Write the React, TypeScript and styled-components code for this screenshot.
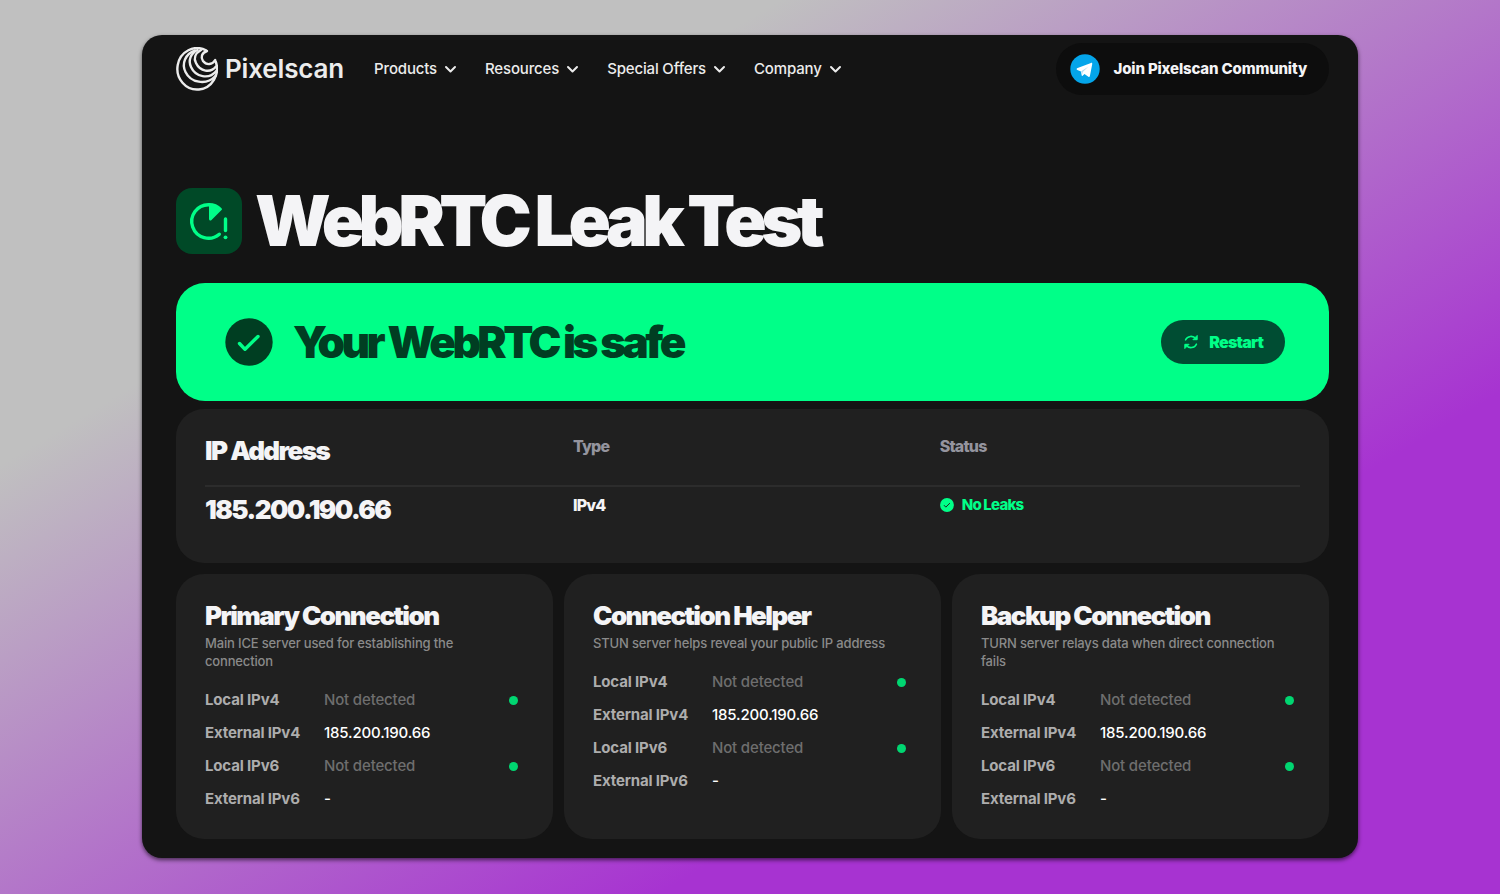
import React from "react";
import styled, { createGlobalStyle } from "styled-components";

const GlobalStyle = createGlobalStyle`
  *, *::before, *::after { box-sizing: border-box; }
  body {
    margin: 0;
    font-family: Inter, "Liberation Sans", sans-serif;
    letter-spacing: -0.01em;
    color: #f4f4f6;
    -webkit-font-smoothing: antialiased;
  }
  h1, h2, h3, p, dl, dd, dt, ul { margin: 0; padding: 0; }
  button { font-family: inherit; letter-spacing: inherit; border: 0; cursor: pointer; }
`;

const tracking = {
  display: "-0.08em",
  heading: "-0.06em",
  label: "-0.05em",
};

const Page = styled.div`
  min-height: 100vh;
  padding: 35px 142px 36px;
  background: linear-gradient(to bottom right, #c0c0c0 26%, #a733d1 72%);
`;

const Window = styled.div`
  padding: 8px 29px 19px 34px;
  border-radius: 20px;
  background: #141414;
  box-shadow: 0 2px 4px rgba(0, 0, 0, 0.6);
`;

const Header = styled.header`
  display: flex;
  align-items: center;
  height: 52px;
`;

const Brand = styled.a`
  display: flex;
  align-items: center;
  gap: 7px;
  color: #ececec;
  font-size: 26px;
  font-weight: 600;
  line-height: 44px;
  text-decoration: none;
`;

const Nav = styled.nav`
  display: flex;
  gap: 28px;
  margin-left: 30px;
`;

const NavButton = styled.button`
  display: flex;
  align-items: center;
  gap: 7px;
  padding: 0;
  background: none;
  color: #ececec;
  font-size: 15px;
  font-weight: 500;
  line-height: 20px;
`;

const Community = styled.a`
  display: flex;
  align-items: center;
  gap: 14px;
  height: 52px;
  margin-left: auto;
  padding: 0 22px 0 14px;
  border-radius: 26px;
  background: #0d0d0d;
  color: #f4f4f6;
  font-size: 15px;
  font-weight: 800;
  line-height: 20px;
  text-decoration: none;
`;

const TitleRow = styled.div`
  display: flex;
  align-items: center;
  gap: 13px;
  margin-top: 93px;
`;

const TitleIcon = styled.span`
  display: flex;
  width: 66px;
  height: 66px;
  border-radius: 16px;
  background: #004927;
`;

const Title = styled.h1`
  font-size: 70px;
  font-weight: 900;
  line-height: 66px;
  letter-spacing: ${tracking.display};
`;

const Banner = styled.section`
  display: flex;
  align-items: center;
  gap: 20px;
  height: 118px;
  margin-top: 29px;
  padding: 0 44px 0 49px;
  border-radius: 29px;
  background: #00ff88;
  color: #003e22;
`;

const BannerText = styled.h2`
  font-size: 44px;
  font-weight: 900;
  line-height: 48px;
  letter-spacing: ${tracking.display};
`;

const Restart = styled.button`
  display: flex;
  align-items: center;
  gap: 10px;
  height: 44px;
  margin-left: auto;
  padding: 0 22px;
  border-radius: 22px;
  background: #004d33;
  color: #00ff88;
  font-size: 16px;
  font-weight: 900;
  letter-spacing: ${tracking.label};
`;

const Panel = styled.section`
  padding: 28px 29px 30px;
  border-radius: 28px;
  background: #202020;
`;

const AddressPanel = styled(Panel)`
  min-height: 154px;
  margin-top: 8px;
`;

const AddressTable = styled.table`
  width: 100%;
  table-layout: fixed;
  border-collapse: collapse;
  text-align: left;

  th, td {
    padding: 0;
    vertical-align: top;
    font-weight: 800;
    letter-spacing: ${tracking.label};
  }
  thead tr { border-bottom: 2px solid #2c2c2c; }
`;

const HeadCell = styled.th`
  height: 49px;
  color: #94949e;
  font-size: 16px;
  line-height: 18px;
`;

const BigText = styled.div`
  color: #f4f4f6;
  font-size: 26px;
  font-weight: 900;
  line-height: 28px;
  letter-spacing: ${tracking.heading};
`;

const DataCell = styled.td`
  height: 40px;
  font-size: 16px;
  line-height: 18px;
`;

const CellBody = styled.div`
  padding-top: 9px;
`;

const Status = styled.div`
  display: flex;
  align-items: center;
  gap: 8px;
  padding-top: 9px;
  color: #00ff88;
  font-size: 15px;
`;

const Cards = styled.div`
  display: grid;
  grid-template-columns: repeat(3, 1fr);
  gap: 11px;
  margin-top: 11px;
`;

const CardTitle = styled.h3`
  font-size: 26px;
  font-weight: 900;
  line-height: 28px;
  letter-spacing: ${tracking.heading};
`;

const CardNote = styled.p`
  margin-top: 4px;
  color: #8a8a8a;
  font-size: 13px;
  font-weight: 500;
  line-height: 18px;
`;

const Facts = styled.dl`
  display: flex;
  flex-direction: column;
  gap: 13px;
  margin-top: 20px;
`;

const Fact = styled.div`
  display: flex;
  align-items: center;
  padding-right: 6px;
  font-size: 15px;
  line-height: 20px;
`;

const FactName = styled.dt`
  width: 119px;
  color: #adadad;
  font-weight: 700;
`;

const FactValue = styled.dd<{ $muted?: boolean }>`
  flex: 1;
  color: ${(p) => (p.$muted ? "#6e6e6e" : "#ffffff")};
  font-weight: 500;
`;

const Dot = styled.span`
  width: 9px;
  height: 9px;
  border-radius: 50%;
  background: #00d671;
`;

const Logo = () => (
  <svg width="42" height="44" viewBox="0 0 42 44" fill="none" stroke="#ececec" strokeWidth="2.400" strokeLinecap="round" aria-hidden="true">
    <path d="M30 3.300A19.800 20.700 0 1 0 39.700 14.500" />
    <path d="M19 3.500C9 7 5.500 17 9.500 25C14.500 35.500 30 39 39.500 29" />
    <path d="M21.500 3C14.500 6.500 12 13.500 15 20C19.500 30 33 33 40.300 24" />
    <path d="M25 3C19 6.500 17.500 11.500 20 16C24 24.500 34.500 26.500 40 19.500" />
    <path d="M31 4C25.500 6 24.500 10.500 27 14C30.500 18.500 36.500 18 39.200 13" />
  </svg>
);

const Chevron = () => (
  <svg width="13" height="8" viewBox="0 0 13 8" fill="none" stroke="currentColor" strokeWidth="2" strokeLinecap="round" strokeLinejoin="round" aria-hidden="true">
    <path d="M2 2l4.500 4.500L11 2" />
  </svg>
);

const Telegram = () => (
  <svg width="30" height="30" viewBox="0 0 30 30" aria-hidden="true">
    <circle cx="15" cy="15" r="14.700" fill="#04a5ea" />
    <path d="M6.300 14.600L21 8.900c.8-.3 1.400.2 1.200 1.300l-2.300 11.900c-.2.900-.8 1.100-1.500.7l-3.900-2.900-1.900 1.900c-.4.400-.9.200-.9-.3l-.7-4.100-3.700-1.300c-.8-.3-.8-1.100-.1-1.500z" fill="#fff" />
    <path d="M11.200 17.200l7.300-4.700-5.700 5.500-.6 2.600z" fill="#b9dcf0" />
  </svg>
);

const LeakIcon = () => (
  <svg width="66" height="66" viewBox="0 0 66 66" fill="none" aria-hidden="true">
    <path d="M43.300 46.200A16.700 16.700 0 1 1 33 16.800" stroke="#00ff88" strokeWidth="3.400" strokeLinecap="round" />
    <path d="M33 15.100c5 0 9.500 1.800 12.500 5.100.6.700.6 1.300 0 1.900L35.500 31.900c-1 1-2.500.4-2.500-1z" fill="#00ff88" />
    <path d="M49.500 31v11.500" stroke="#00ff88" strokeWidth="3.400" strokeLinecap="round" />
    <circle cx="49.500" cy="49.300" r="1.900" fill="#00ff88" />
  </svg>
);

const Check = ({ size, disc, mark }: { size: number; disc: string; mark: string }) => (
  <svg width={size} height={size} viewBox="0 0 48 48" fill="none" aria-hidden="true">
    <circle cx="24" cy="24" r="23.700" fill={disc} />
    <path d="M14.500 25.500l5.500 5.800L33 18.500" stroke={mark} strokeWidth="3.400" strokeLinecap="round" strokeLinejoin="round" />
  </svg>
);

const Refresh = () => (
  <svg width="16" height="16" viewBox="0 0 16 16" fill="none" stroke="currentColor" strokeWidth="1.600" strokeLinecap="round" strokeLinejoin="round" aria-hidden="true">
    <path d="M2.600 5.800C4.300 1.900 10 1 13 5" />
    <path d="M14.200 1.800v3.900h-3.900z" fill="currentColor" strokeWidth="1" />
    <path d="M13.400 10.200C11.700 14.100 6 15 3 11" />
    <path d="M1.800 14.200v-3.900h3.900z" fill="currentColor" strokeWidth="1" />
  </svg>
);

const menu = ["Products", "Resources", "Special Offers", "Company"];

const connections = [
  { title: "Primary Connection", note: "Main ICE server used for establishing the connection" },
  { title: "Connection Helper", note: "STUN server helps reveal your public IP address" },
  { title: "Backup Connection", note: "TURN server relays data when direct connection fails" },
];

const facts = [
  { name: "Local IPv4", value: "Not detected", missing: true },
  { name: "External IPv4", value: "185.200.190.66", missing: false },
  { name: "Local IPv6", value: "Not detected", missing: true },
  { name: "External IPv6", value: "-", missing: false },
];

export default function App() {
  return (
    <Page>
      <GlobalStyle />
      <Window>
        <Header>
          <Brand href="#"><Logo />Pixelscan</Brand>
          <Nav>
            {menu.map((item) => (
              <NavButton key={item} type="button">{item}<Chevron /></NavButton>
            ))}
          </Nav>
          <Community href="#"><Telegram />Join Pixelscan Community</Community>
        </Header>
        <main>
          <TitleRow>
            <TitleIcon><LeakIcon /></TitleIcon>
            <Title>WebRTC Leak Test</Title>
          </TitleRow>
          <Banner>
            <Check size={48} disc="#003e22" mark="#00ff88" />
            <BannerText>Your WebRTC is safe</BannerText>
            <Restart type="button"><Refresh />Restart</Restart>
          </Banner>
          <AddressPanel>
            <AddressTable>
              <colgroup>
                <col width="33.6%" />
                <col width="33.5%" />
                <col />
              </colgroup>
              <thead>
                <tr>
                  <HeadCell scope="col"><BigText>IP Address</BigText></HeadCell>
                  <HeadCell scope="col">Type</HeadCell>
                  <HeadCell scope="col">Status</HeadCell>
                </tr>
              </thead>
              <tbody>
                <tr>
                  <DataCell><CellBody><BigText>185.200.190.66</BigText></CellBody></DataCell>
                  <DataCell><CellBody>IPv4</CellBody></DataCell>
                  <DataCell>
                    <Status><Check size={14} disc="#00ff88" mark="#202020" />No Leaks</Status>
                  </DataCell>
                </tr>
              </tbody>
            </AddressTable>
          </AddressPanel>
          <Cards>
            {connections.map((c) => (
              <Panel key={c.title}>
                <CardTitle>{c.title}</CardTitle>
                <CardNote>{c.note}</CardNote>
                <Facts>
                  {facts.map((f) => (
                    <Fact key={f.name}>
                      <FactName>{f.name}</FactName>
                      <FactValue $muted={f.missing}>{f.value}</FactValue>
                      {f.missing && <Dot />}
                    </Fact>
                  ))}
                </Facts>
              </Panel>
            ))}
          </Cards>
        </main>
      </Window>
    </Page>
  );
}
